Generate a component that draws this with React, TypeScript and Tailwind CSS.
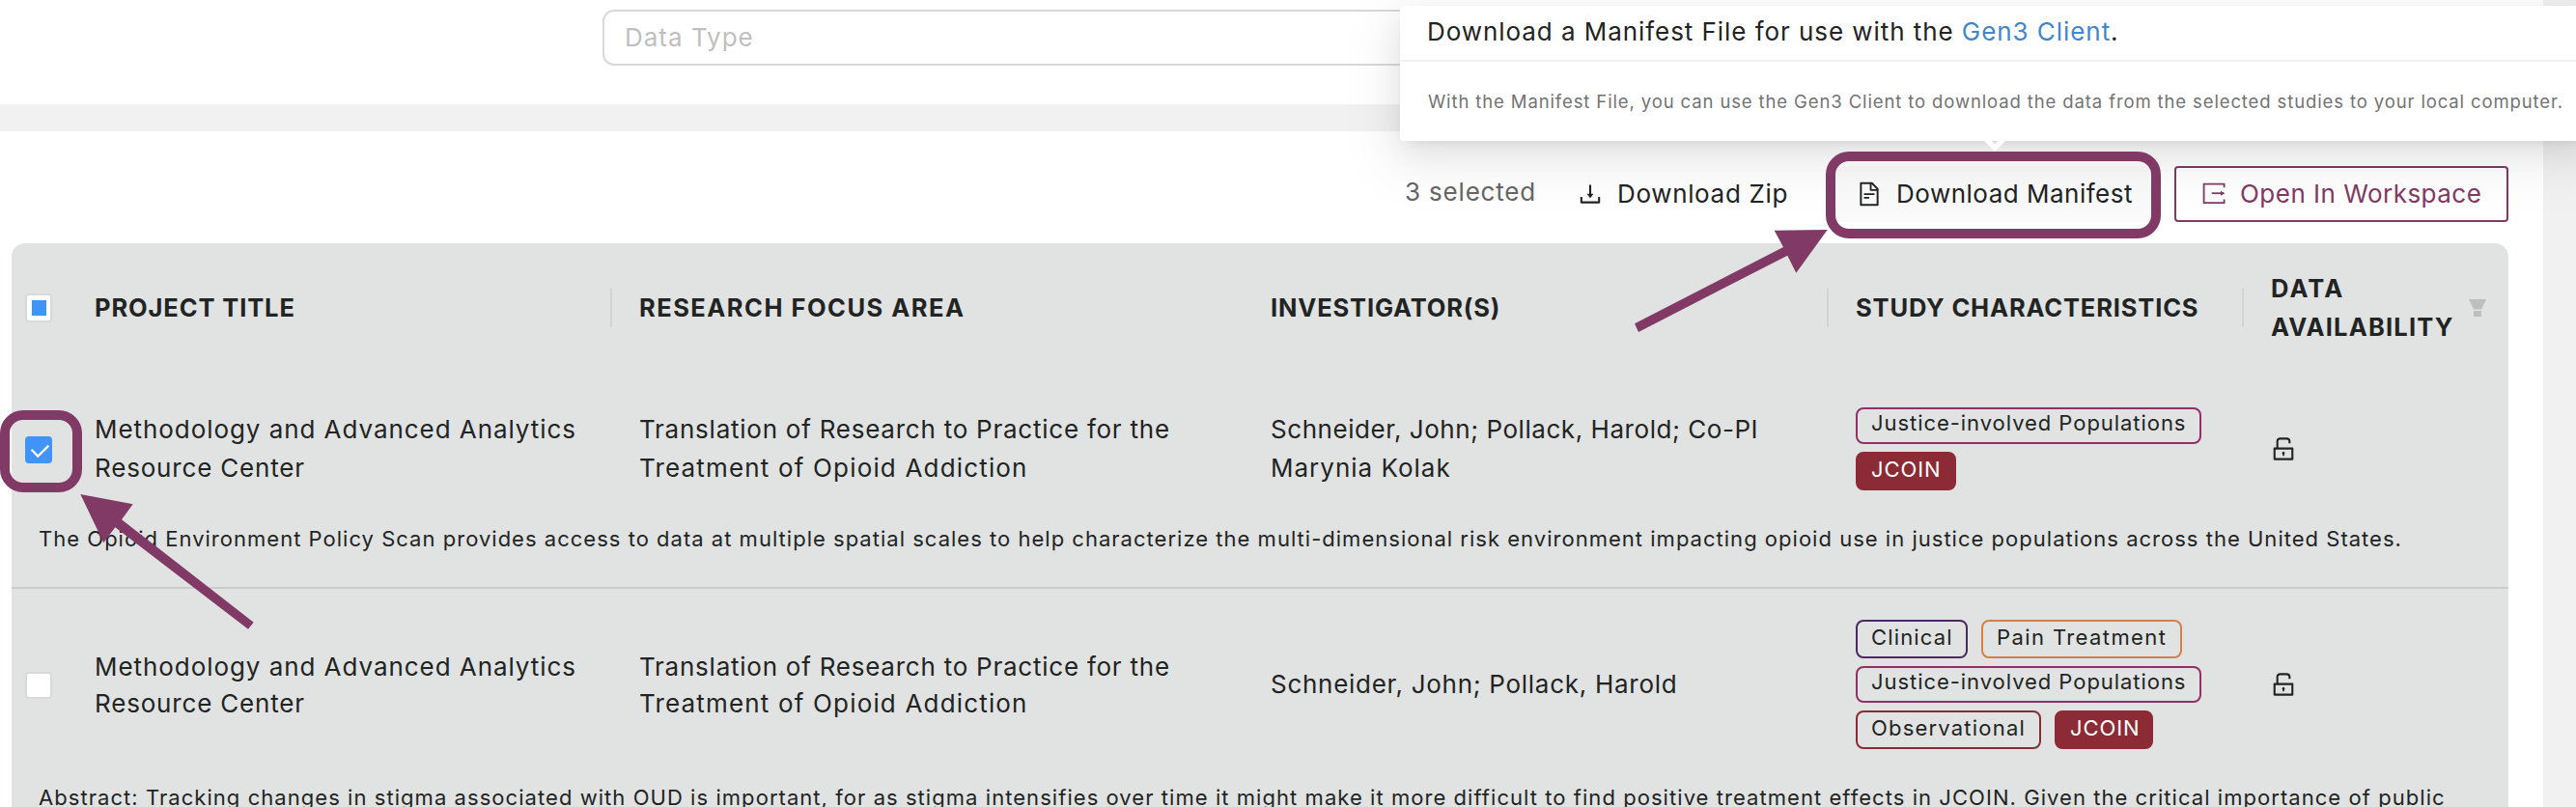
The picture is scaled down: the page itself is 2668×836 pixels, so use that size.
import type { ReactNode } from "react";
import { AiOutlineDownload, AiOutlineFileText, AiOutlineUnlock } from "react-icons/ai";

type Line = { text: string; tracking: string };
type TagInfo = { label: string; className: string };

const GRID = "grid grid-cols-[86px_564px_654px_606px_430px_246px] items-center";

const PROJECT: Line[] = [
  { text: "Methodology and Advanced Analytics", tracking: "tracking-[0.94px]" },
  { text: "Resource Center", tracking: "tracking-[0.82px]" },
];

const FOCUS: Line[] = [
  { text: "Translation of Research to Practice for the", tracking: "tracking-[0.76px]" },
  { text: "Treatment of Opioid Addiction", tracking: "tracking-[1.17px]" },
];

const JUSTICE: TagInfo = {
  label: "Justice-involved Populations",
  className: "w-[358px] h-[38px] leading-[29px] border-[#8f3067] tracking-[0.95px]",
};

function ExportIcon() {
  return (
    <svg viewBox="0 0 28 28" className="size-7" fill="none" stroke="currentColor" strokeWidth="1.8">
      <path d="M25.6 7.2V3.6H4.6V23.2H25.6V19.6" />
      <path d="M12.7 13.2H22.5" />
      <path d="M22 10.7 26.5 13.2 22 15.7Z" fill="currentColor" stroke="none" />
    </svg>
  );
}

function FilterIcon() {
  return (
    <svg viewBox="0 0 18 18" className="size-[18px]" fill="#bdbebe">
      <path d="M0 0H18L13 10.4H5Z" />
      <path d="M5 12H13V18H5Z" />
    </svg>
  );
}

function Lines({ lines, className }: { lines: Line[]; className: string }) {
  return (
    <div className={className}>
      {lines.map((line) => (
        <div key={line.text} className={line.tracking}>
          {line.text}
        </div>
      ))}
    </div>
  );
}

function Tag({ label, className }: TagInfo) {
  return (
    <span className={`block rounded-lg border-2 pl-[14px] text-[22px] ${className}`}>{label}</span>
  );
}

function Divided({ children, className = "" }: { children: ReactNode; className?: string }) {
  return (
    <div className={`relative flex items-center ${className}`}>
      <span className="absolute -left-[30px] top-1/2 h-10 w-0.5 -translate-y-1/2 bg-[#d3d5d4]" />
      {children}
    </div>
  );
}

function TableHeader() {
  return (
    <div className={`${GRID} h-[134px] text-[25.5px] font-bold leading-10`}>
      <div className="pl-[14px]">
        <div className="flex h-[30px] w-7 items-center justify-center rounded border-2 border-[#d8d9d9] bg-white">
          <span className="h-4 w-[15px] bg-[#4094f8]" />
        </div>
      </div>
      <div className="tracking-[0.88px]">PROJECT TITLE</div>
      <Divided>
        <span className="tracking-[1.48px]">RESEARCH FOCUS AREA</span>
      </Divided>
      <div className="tracking-[0.84px]">INVESTIGATOR(S)</div>
      <Divided>
        <span className="tracking-[0.84px]">STUDY CHARACTERISTICS</span>
      </Divided>
      <Divided className="justify-between pr-[23px]">
        <div>
          <div className="tracking-[2.1px]">DATA</div>
          <div className="tracking-[1.2px]">AVAILABILITY</div>
        </div>
        <FilterIcon />
      </Divided>
    </div>
  );
}

function FirstStudy() {
  return (
    <div className="border-b-2 border-[#cacccb]">
      <div className={`${GRID} h-[158px] text-[26px]`}>
        <div className="pl-[14px] pt-0.5">
          <div className="size-7 rounded bg-[#4094f8]">
            <svg viewBox="0 0 28 28" className="size-7" fill="none" stroke="white" strokeWidth="2.2">
              <path d="M6.6 13.8 13.2 20.6 24.4 9.6" />
            </svg>
          </div>
        </div>
        <Lines lines={PROJECT} className="leading-10" />
        <Lines lines={FOCUS} className="leading-10" />
        <Lines
          className="leading-10"
          lines={[
            { text: "Schneider, John; Pollack, Harold; Co-PI", tracking: "tracking-[0.55px]" },
            { text: "Marynia Kolak", tracking: "tracking-[1px]" },
          ]}
        />
        <div className="flex flex-col gap-2">
          <Tag {...JUSTICE} />
          <Tag
            label="JCOIN"
            className="h-10 w-[104px] border-[#8c2a35] bg-[#8c2a35] leading-[32px] tracking-[0.9px] text-white"
          />
        </div>
        <AiOutlineUnlock className="-ml-0.5 size-[30px]" />
      </div>
      <p className="h-16 pl-7 text-[22px] leading-[29px] tracking-[1.017px]">
        The Opioid Environment Policy Scan provides access to data at multiple spatial scales to help
        characterize the multi-dimensional risk environment impacting opioid use in justice
        populations across the United States.
      </p>
    </div>
  );
}

function SecondStudy() {
  return (
    <div>
      <div className={`${GRID} h-[198px] text-[26px]`}>
        <div className="pl-[14px] pt-0.5">
          <div className="size-7 rounded border-2 border-[#d8d9d9] bg-white" />
        </div>
        <Lines lines={PROJECT} className="pt-0.5 leading-[38px]" />
        <Lines lines={FOCUS} className="pt-0.5 leading-[38px]" />
        <div className="leading-[38px] tracking-[0.72px]">Schneider, John; Pollack, Harold</div>
        <div className="flex flex-col gap-2">
          <div className="flex gap-[14px]">
            <Tag
              label="Clinical"
              className="h-10 w-[116px] border-[#4b2a60] leading-[32px] tracking-[1.15px]"
            />
            <Tag
              label="Pain Treatment"
              className="h-10 w-[208px] border-[#d77f49] leading-[32px] tracking-[1.4px]"
            />
          </div>
          <Tag {...JUSTICE} />
          <div className="flex gap-[14px]">
            <Tag
              label="Observational"
              className="h-10 w-[192px] border-[#8c2a35] leading-[32px] tracking-[1.2px]"
            />
            <Tag
              label="JCOIN"
              className="h-10 w-[102px] border-[#8c2a35] bg-[#8c2a35] leading-[32px] tracking-[0.9px] text-white"
            />
          </div>
        </div>
        <AiOutlineUnlock className="-ml-0.5 size-[30px]" />
      </div>
      <p className="pl-7 text-[22px] leading-[37px] tracking-[1.053px]">
        Abstract: Tracking changes in stigma associated with OUD is important, for as stigma
        intensifies over time it might make it more difficult to find positive treatment effects in
        JCOIN. Given the critical importance of public
      </p>
    </div>
  );
}

function Toolbar() {
  return (
    <div className="flex h-[58px] items-center justify-end gap-4 pr-9 text-[26px] leading-10">
      <span className="pb-1 tracking-[0.8px] text-[#666]">3 selected</span>
      <button className="flex h-[58px] w-[273px] items-center gap-[14px] pl-[26px] tracking-[0.66px]">
        <AiOutlineDownload className="size-7" />
        Download Zip
      </button>
      <button className="flex h-[58px] w-[340px] items-center gap-[14px] bg-black/[0.018] pl-[26px] tracking-[0.5px]">
        <AiOutlineFileText className="size-7" />
        Download Manifest
      </button>
      <button className="flex h-[58px] w-[346px] items-center gap-[14px] rounded border-2 border-[#813a66] pl-6 tracking-[0.48px] text-[#813a66]">
        <ExportIcon />
        Open In Workspace
      </button>
    </div>
  );
}

function ManifestPopover() {
  return (
    <div className="absolute left-[1450px] top-[6px] h-[140px] w-[1232px] rounded bg-white shadow-[0_6px_12px_-8px_rgba(0,0,0,0.12),0_12px_32px_0_rgba(0,0,0,0.08),0_18px_56px_16px_rgba(0,0,0,0.05)]">
      <div className="h-[58px] border-b-2 border-[#f0f0f0] pl-7 text-[26px] leading-[54px] tracking-[0.94px]">
        Download a Manifest File for use with the <span className="text-[#4186cb]">Gen3 Client</span>.
      </div>
      <div className="pl-[29px] text-[18.5px] leading-[83px] tracking-[0.88px] text-[#737373]">
        With the Manifest File, you can use the Gen3 Client to download the data from the selected
        studies to your local computer.
      </div>
      <svg viewBox="0 0 22 11" className="absolute left-[605px] top-[140px] h-[11px] w-[22px]">
        <path d="M0 0H22L11 11Z" fill="#fff" />
        <path d="M7.5 0H14.5L11 3.2Z" fill="#dcdcdc" />
      </svg>
    </div>
  );
}

function Callouts() {
  return (
    <>
      <div className="absolute left-[1891px] top-[157px] h-[90px] w-[347px] rounded-3xl border-10 border-[#813a66]" />
      <div className="absolute left-0 top-[425px] h-[85px] w-[85px] rounded-3xl border-10 border-[#813a66]" />
      <svg viewBox="0 0 2668 836" className="pointer-events-none absolute inset-0 h-[836px] w-[2668px]" fill="#813a66">
        <path d="M1892.7 238 1837.7 238.7 1847 256 1693 335.3 1697 344 1851.3 264.7 1860.3 282.7Z" />
        <path d="M83.3 512 137.7 522.3 126 538.3 262.7 644.7 257 651.7 119.3 546.3 107.3 562.3Z" />
      </svg>
    </>
  );
}

export default function App() {
  return (
    <div className="relative h-[836px] w-[2668px] overflow-hidden whitespace-nowrap bg-[#f1f1f1] font-['Inter',sans-serif] text-[#222423]">
      <div className="flex w-[2634px] flex-col gap-7">
        <section className="h-[108px] bg-white pl-[624px] pt-[10px]">
          <div className="h-[58px] w-[1400px] rounded-xl border-2 border-[#d9d9d9] pl-[21px] text-[26px] leading-[53px] tracking-[1px] text-[#bfbfbf]">
            Data Type
          </div>
        </section>
        <section className="h-[700px] bg-white pt-9">
          <Toolbar />
          <div className="ml-3 mt-[22px] h-[600px] w-[2586px] rounded-t-[14px] bg-[#e1e3e2]">
            <TableHeader />
            <FirstStudy />
            <SecondStudy />
          </div>
        </section>
      </div>
      <ManifestPopover />
      <Callouts />
    </div>
  );
}
